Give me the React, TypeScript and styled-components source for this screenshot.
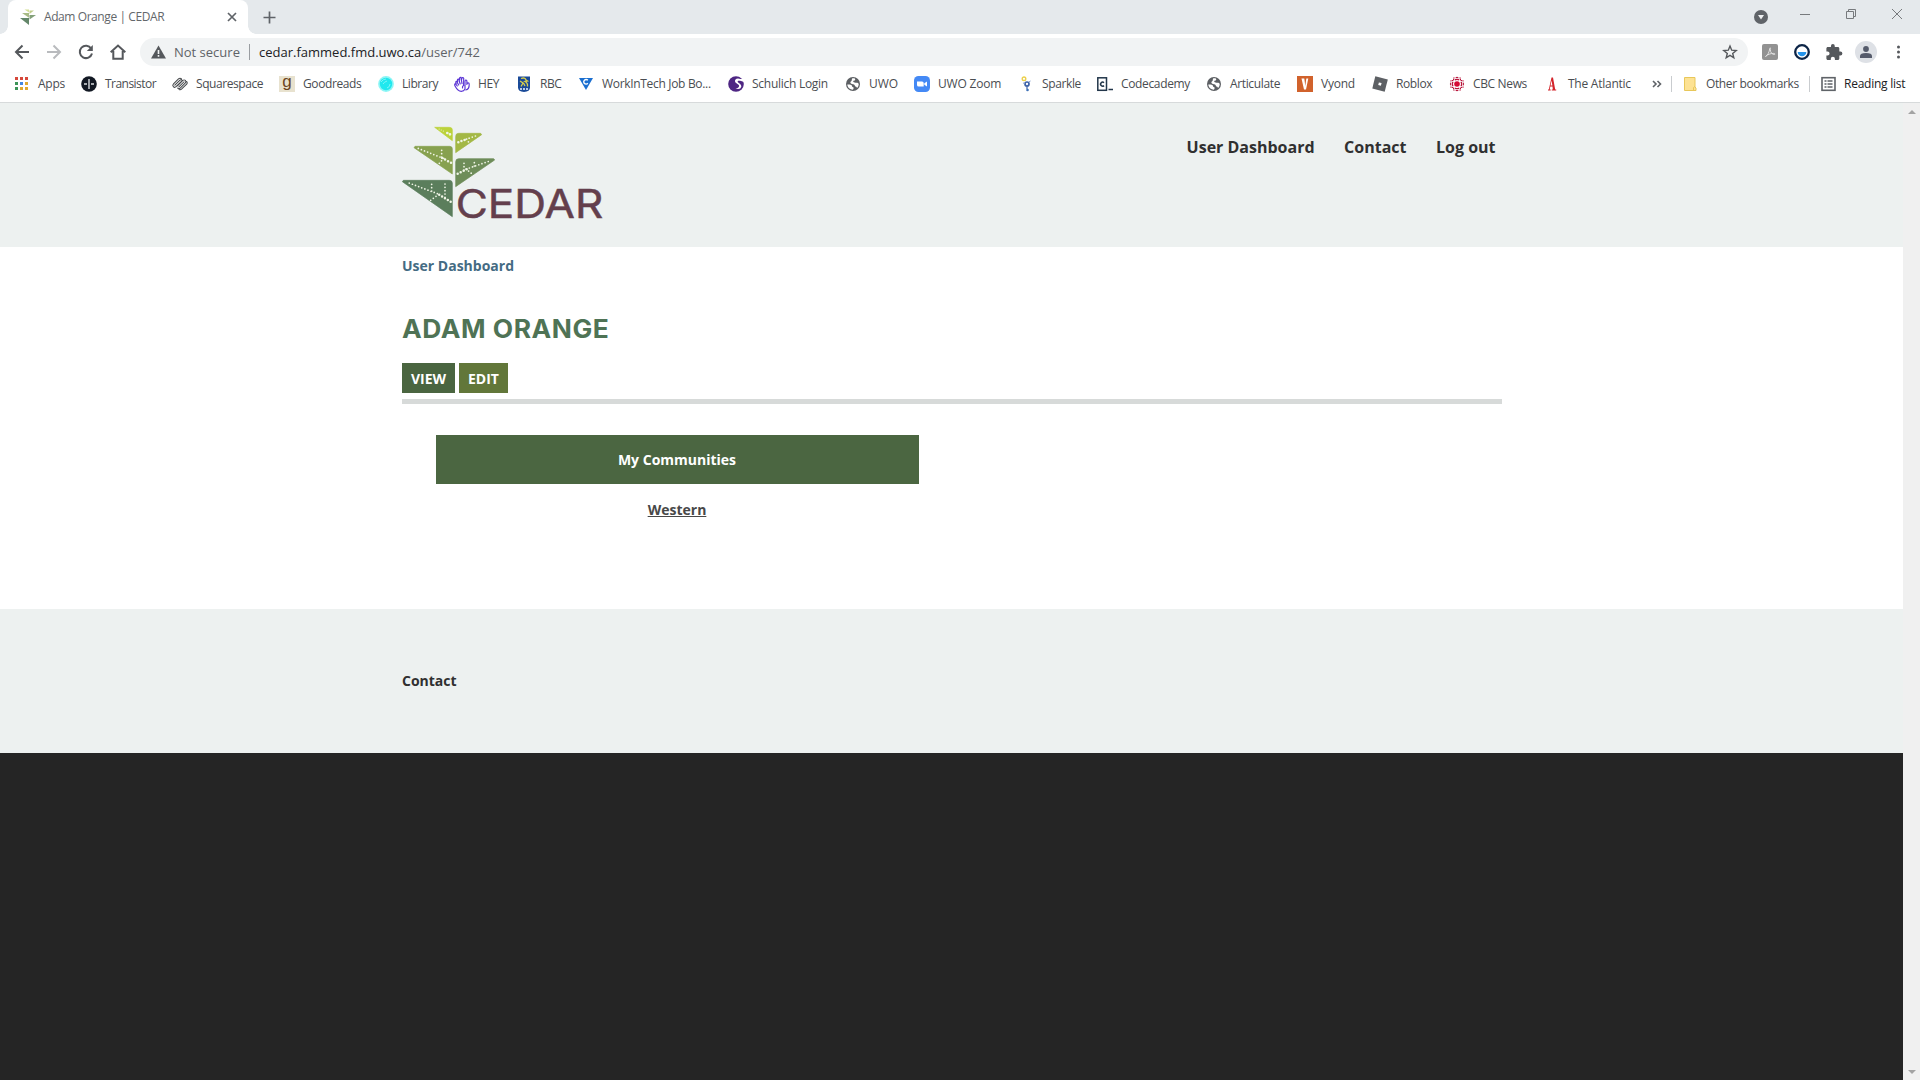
import React from 'react';
import styled, { createGlobalStyle } from 'styled-components';

const GlobalStyle = createGlobalStyle`
  *, *::before, *::after { box-sizing: border-box; }
  body { margin: 0; background: #fff; overflow: hidden; font-family: "Open Sans", "Noto Sans", sans-serif; }
  svg { display: block; flex: none; overflow: visible; }
  a { color: inherit; text-decoration: none; }
`;

const Window = styled.div`
  display: flex;
  flex-direction: column;
  width: 1920px;
  height: 1080px;
`;

/* ---------- browser frame ---------- */

const TabStrip = styled.div`
  display: flex;
  height: 34px;
  padding-left: 8px;
  background: #e5e9ec;
`;

const Tab = styled.div`
  position: relative;
  display: flex;
  align-items: center;
  width: 240px;
  padding: 0 11px 0 12px;
  border-radius: 8px 8px 0 0;
  background: #fff;

  &::before, &::after {
    content: "";
    position: absolute;
    bottom: 0;
    width: 8px;
    height: 8px;
  }
  &::before { left: -8px; background: radial-gradient(circle at 0 0, transparent 7.5px, #fff 8px); }
  &::after { right: -8px; background: radial-gradient(circle at 100% 0, transparent 7.5px, #fff 8px); }
`;

const TabTitle = styled.span`
  flex: 1;
  margin-left: 8px;
  font-size: 12px;
  line-height: 16px;
  letter-spacing: -0.42px;
  color: #63676b;
  white-space: nowrap;
`;

const NewTab = styled.div`
  display: flex;
  align-items: center;
  margin-left: 15px;
`;

const WindowControls = styled.div`
  display: flex;
  align-items: flex-start;
  margin-left: auto;
  padding-right: 18px;
`;

const Control = styled.div<{ $gap: number; $top: number }>`
  margin-right: ${p => p.$gap}px;
  padding-top: ${p => p.$top}px;
`;

const Toolbar = styled.div`
  display: flex;
  align-items: center;
  height: 36px;
  padding-left: 14px;
`;

const NavButtons = styled.div`
  display: flex;
  align-items: center;
  gap: 16px;
  width: 126px;
`;

const Omnibox = styled.div`
  display: flex;
  align-items: center;
  width: 1608px;
  height: 28px;
  padding: 0 10px 0 11px;
  border-radius: 14px;
  background: #f1f3f4;
  font-size: 13px;
  color: #5f6368;
`;

const Security = styled.span`
  width: 75px;
  margin-left: 8px;
`;

const OmniDivider = styled.span`
  width: 1px;
  height: 16px;
  margin-right: 9px;
  background: #9a9da1;
`;

const Url = styled.span`
  flex: 1;
  b { font-weight: 400; color: #202124; }
`;

const Extensions = styled.div`
  display: flex;
  align-items: center;
  margin-left: 14px;
`;

const Extension = styled.div<{ $w: number }>`
  width: ${p => p.$w}px;
`;

const Avatar = styled.div`
  display: flex;
  align-items: center;
  justify-content: center;
  width: 22px;
  height: 22px;
  margin-right: 19px;
  border-radius: 50%;
  background: #dee1e6;
`;

const BookmarkBar = styled.div`
  display: flex;
  align-items: center;
  height: 33px;
  padding: 0 0 4px 14px;
  border-bottom: 1px solid #d7dadb;
`;

const Bookmark = styled.div<{ $w: number; $ls?: number; $dark?: boolean }>`
  display: flex;
  align-items: center;
  gap: 8px;
  flex: none;
  width: ${p => p.$w}px;
  font-size: 12px;
  line-height: 16px;
  letter-spacing: ${p => p.$ls ?? -0.4}px;
  color: ${p => (p.$dark ? '#202124' : '#4a4d51')};
  white-space: nowrap;
`;

const Overflow = styled.div`
  width: 19px;
`;

const BarDivider = styled.div<{ $gap: number }>`
  width: 1px;
  height: 16px;
  margin-right: ${p => p.$gap}px;
  background: #c9cccf;
`;

const Letter = styled.span<{ $bg: string; $fg: string; $size: number; $font: string }>`
  display: flex;
  align-items: center;
  justify-content: center;
  flex: none;
  width: 16px;
  height: 16px;
  background: ${p => p.$bg};
  color: ${p => p.$fg};
  font: 400 ${p => p.$size}px/12px ${p => p.$font};
  padding-bottom: 4px;
  letter-spacing: 0;
`;

/* ---------- web page ---------- */

const Viewport = styled.div`
  display: grid;
  grid-template-columns: 1903px 17px;
  flex: 1;
`;

const Page = styled.div`
  display: flex;
  flex-direction: column;
  background: #252525;
  color: #303030;
  font-weight: 700;
`;

const Container = styled.div`
  width: 1101px;
  margin: 0 auto;
  padding-left: 1px;
`;

const Header = styled.header`
  height: 144px;
  background: #edf1f0;
`;

const HeaderRow = styled(Container)`
  display: flex;
  justify-content: space-between;
  padding-top: 23px;
`;

const MainNav = styled.nav`
  display: flex;
  gap: 29.500px;
  padding: 9px 6.500px 0 0;
  font-size: 16px;
  line-height: 24px;
`;

const Main = styled.main`
  height: 362px;
  background: #fff;
`;

const Breadcrumb = styled.div`
  padding-top: 8px;
  font-size: 14px;
  line-height: 21px;
  color: #446b83;
`;

const Title = styled.h1`
  width: max-content;
  margin: 37px 0 0;
  font: 700 25px/32px Inter, "Open Sans", sans-serif;
  letter-spacing: 0.5px;
  color: #4f7355;
  transform: scaleX(1.056);
  transform-origin: left;
`;

const Tabs = styled.div`
  display: flex;
  gap: 4px;
  height: 59px;
  margin-top: 0;
  padding-top: 18px;
  border-bottom: 5px solid #d7dad9;
`;

const PageTab = styled.a<{ $active?: boolean; $w: number }>`
  display: flex;
  align-items: center;
  justify-content: center;
  width: ${p => p.$w}px;
  height: 30px;
  padding-top: 1px;
  background: ${p => (p.$active ? '#4a6540' : '#62773a')};
  color: #fff;
  font-size: 14px;
  line-height: 29px;
`;

const Communities = styled.section`
  width: 483px;
  margin: 31px 0 0 34px;
  font-size: 14px;
  text-align: center;
`;

const CommunitiesTitle = styled.h2`
  margin: 0;
  height: 49px;
  padding-right: 1px;
  background: #4b6641;
  color: #fff;
  font-size: 14px;
  line-height: 49px;
`;

const CommunityLink = styled.a`
  display: inline-block;
  margin: 15px 1px 0 0;
  line-height: 21px;
  color: #484848;
  text-decoration: underline;
`;

const Footer = styled.footer`
  height: 144px;
  padding-top: 61px;
  background: #edf1f0;
  font-size: 14px;
  line-height: 21px;
`;

const Scrollbar = styled.div`
  display: flex;
  flex-direction: column;
  align-items: center;
  justify-content: space-between;
  padding: 7px 0 6px;
  background: #f0f0f0;
`;

/* ---------- drawings ---------- */

const leaves = [
  ['M134 52H178Q187 52 187 60V92Z', '#bbd23a'],
  ['M272 70H206Q197 70 197 80V128L275 74Z', '#a3b845'],
  ['M75 109H179Q187 109 187 117V192L72 113Z', '#87a14f'],
  ['M311 146H206Q197 146 197 156V230L314 150Z', '#6e8d59'],
  ['M40 211H178Q187 211 187 220V320L37 215Z', '#5b7e5c'],
];

const CedarLogo = () => (
  <svg width="204" height="108" viewBox="36 48 612 324">
    {leaves.map(([d, fill]) => (
      <path key={d} d={d} fill={fill} stroke={fill} strokeWidth="2" strokeLinejoin="round" />
    ))}
    <g fill="none" stroke="#f0f5e6" strokeLinecap="round">
      <path d="M183 158L150 141M205 97L228 88M203 191L238 174M182 275L142 251" strokeWidth="7.500" strokeDasharray="0 10" />
      <path d="M150 141L84 115M228 88L262 76M238 174L302 152M142 251L52 217M155 141V113M148 160L162 144M230 87L238 100M222 180V150M253 168V150M228 177L249 194M125 243V214M165 262V214M122 271L146 253" strokeWidth="5.200" strokeDasharray="0 10" />
      <path d="M180 73L166 66" strokeWidth="8" strokeDasharray="0 9" />
      <path d="M160 63L145 56" strokeWidth="3.500" strokeDasharray="0 7" />
    </g>
    <text x="197" y="323" fontFamily="Inter, sans-serif" fontSize="117" fontWeight="400" fill="#643f4c"
      stroke="#643f4c" strokeWidth="1.500" textLength="443" lengthAdjust="spacingAndGlyphs">CEDAR</text>
  </svg>
);

const CedarIcon = () => (
  <svg width="16" height="16" viewBox="0 0 16 16">
    <path d="M4.500 .5h4.500v3z" fill="#d3df96" />
    <path d="M9.500 1.500h4.500l-4.500 3.500z" fill="#c0cd8b" />
    <path d="M2 4h7v4.800z" fill="#a8bb86" />
    <path d="M9.500 6H16l-6.500 4.500z" fill="#84a07a" />
    <path d="M0 9h9v7z" fill="#64876a" />
  </svg>
);

const Globe = () => (
  <svg width="16" height="16" viewBox="0 0 16 16">
    <circle cx="8" cy="8" r="7" fill="#5c5f63" />
    <path d="M2.300 8.500C4 8.300 6.200 8.500 6.800 9.500S7 11 8.200 11.300 8 13.400 8 13.700C5 13.700 2.500 11.500 2.300 8.500zM7 2.400c2.500-.6 3.500.1 3.200 1.400S8.500 4.300 8.200 5.300 9.500 6.800 11 6.700s2.500.3 2.700 1.300c.1 1.500-.6 3-1.700 4-.4-1.200-1-1.300-1.800-1.400-.6-1-.2-1.600-1.200-2.100S5.800 8 5.400 6.700 6.700 5 6.700 4.400z" fill="#fff" />
  </svg>
);

const AppsIcon = () => {
  const colors = ['#d6483b', '#d6483b', '#d6483b', '#3c9457', '#4387e0', '#e0a92e', '#3c9457', '#e0a92e', '#e0a92e'];
  return (
    <svg width="16" height="16" viewBox="0 0 16 16">
      {colors.map((c, i) => <rect key={i} x={1 + (i % 3) * 5} y={1 + Math.floor(i / 3) * 5} width="3" height="3" fill={c} />)}
    </svg>
  );
};

const TransistorIcon = () => (
  <svg width="16" height="16" viewBox="0 0 16 16">
    <circle cx="8" cy="8" r="7.800" fill="#121823" />
    <path d="M8 3v10M3 8h3M10 8h3" stroke="#d9dce0" strokeWidth="1.400" />
  </svg>
);

const SquarespaceIcon = () => (
  <svg width="16" height="16" viewBox="0 0 17 16" fill="none" stroke="#45484b" strokeWidth="1.100" strokeLinecap="round">
    <path d="M3 9.300L8.200 4.100a1.900 1.900 0 0 1 2.700 0M4.300 10.900l5.500-5.500M1.600 7.900L6.900 2.600a2.300 2.300 0 0 1 3.200 0M1.600 7.900a1.900 1.900 0 0 0 2.700 3M6 12.400a1.900 1.900 0 0 0 2.700 0l5.500-5.500a1.900 1.900 0 0 0-2.700-2.700L6 9.700M7.300 11.100L12.800 5.600M7.600 13.800a2.300 2.300 0 0 0 2.500-.3l5.500-5.400a1.900 1.900 0 0 0 0-2.700" />
  </svg>
);

const LibraryIcon = () => (
  <svg width="16" height="16" viewBox="0 0 16 16">
    <circle cx="8" cy="8" r="7.900" fill="#8df5f5" />
    <circle cx="8" cy="8" r="6.200" fill="#20e8ee" />
    <path d="M3 6q2-3 5-3M5 8q1-2 4-3M9 12q3-1 3-4" stroke="#7af5f7" fill="none" />
  </svg>
);

const HeyIcon = () => (
  <svg width="16" height="16" viewBox="0 0 16 16" fill="none" stroke="#5b35d5" strokeWidth="1.150" strokeLinecap="round" strokeLinejoin="round">
    <path d="M3.300 10L1.300 7.600C.3 8 .6 9.300 1.200 10.300 2.600 13 4.500 15.300 7.300 15.300c1.800 0 3-.8 3.600-2" />
    <path d="M4.600 9L2.700 5.200C1.500 5.200 1.600 6.500 2.200 7.700M6.200 8L4.600 3C3.400 2.800 3.200 4 3.600 5.500M8 7.700L7 1.300C5.700 1 5.300 2 5.600 4M9.600 9L9.700 2.200C9 .9 7.900 1.500 7.900 3M10 9.500C8.800 9.500 8.200 10.500 8.600 12" />
    <path d="M11 12.500V5C11.300 3.600 12.800 3.800 12.900 5V8.500C13.300 6.300 15.200 6.600 15.200 8.300 15.300 11 14.300 13.600 11.700 14" />
  </svg>
);

const RbcIcon = () => (
  <svg width="16" height="16" viewBox="0 0 16 16">
    <path d="M2 .5h12v11Q14 15.500 8 16 2 15.500 2 11.500z" fill="#1a4a98" />
    <path d="M5 2.500q4-1.500 5 1.500l1.500 1-2.500.5q3 1.500 2.500 5M4 5l3 2-2 3.500M7.500 7l1.500 3" fill="none" stroke="#d8cf4b" strokeWidth="1.300" />
    <path d="M4 13h8" stroke="#b9cae6" strokeWidth="2" strokeDasharray="2 1" />
  </svg>
);

const WorkIcon = () => (
  <svg width="16" height="16" viewBox="0 0 16 16">
    <path d="M1 2h14L8 14z" fill="#1b6fd0" />
    <path d="M9.800 4.300a2.300 2.300 0 1 0 0 3" fill="none" stroke="#fff" strokeWidth="1.400" />
  </svg>
);

const SchulichIcon = () => (
  <svg width="16" height="16" viewBox="0 0 16 16">
    <circle cx="8" cy="8" r="7.800" fill="#4e2683" />
    <path d="M16 2.500L12.500 3Q9 1.500 7.300 3.800C6 6.500 9 7.500 10.500 8.700S10.800 12 7.500 12.600Q12.500 14 13.300 10.700C13.600 8 10 7 9.700 5.800S11.500 4.300 16 6z" fill="#fff" />
  </svg>
);

const ZoomIcon = () => (
  <svg width="16" height="16" viewBox="0 0 16 16">
    <rect width="16" height="16" rx="4.500" fill="#4489f5" />
    <path d="M3 5.500h5q1.700 0 1.700 1.500v3.500h-5Q3 10.500 3 9zM10.300 7.300L13 5.500v5l-2.700-1.800z" fill="#fff" />
  </svg>
);

const SparkleIcon = () => (
  <svg width="16" height="16" viewBox="0 0 16 16" fill="none">
    <circle cx="6" cy="2.800" r="1.800" stroke="#ecd04c" strokeWidth="1.400" />
    <circle cx="9" cy="8" r="2" stroke="#3d62a8" strokeWidth="1.700" />
    <path d="M9 10v3" stroke="#3d62a8" strokeWidth="1.200" />
    <circle cx="9.500" cy="14" r="1.300" fill="#3f72b8" />
    <path d="M5 7l2 .5M11 6l1.500-1" stroke="#7f9ccb" />
  </svg>
);

const CodeIcon = () => (
  <svg width="17" height="16" viewBox="0 0 17 16" fill="none" stroke="#22364a">
    <rect x="1.800" y="1.800" width="8.700" height="12.500" strokeWidth="1.500" />
    <path d="M8 6.700a2 2 0 1 0 0 2.900M12.500 13.500h4.500" strokeWidth="1.500" />
  </svg>
);

const VyondIcon = () => (
  <svg width="16" height="16" viewBox="0 0 16 16">
    <rect width="16" height="16" fill="#d1622c" />
    <path d="M4.500 2.500h2.800L8.300 10 9.300 2.500H11.300L9 13.500H7z" fill="#fff" />
  </svg>
);

const RobloxIcon = () => (
  <svg width="16" height="16" viewBox="0 0 16 16">
    <path d="M3.300.3L15.800 3.500 12.700 15.800.3 12.500z" fill="#5d6064" />
    <path d="M6.900 6.400l2.700.7-.7 2.700-2.700-.7z" fill="#fff" />
  </svg>
);

const CbcIcon = () => (
  <svg width="16" height="16" viewBox="0 0 16 16">
    <circle cx="8" cy="8" r="2.800" fill="#d50a35" />
    {[0, 90, 180, 270].map(a => (
      <g key={a} transform={`rotate(${a} 8 8)`} fill="#b8173c">
        <path d="M6 4.500A4 4 0 0 1 10 4.500V3H6zM6.500 2.300h3V1.500Q8 .2 6.500 1.500z" />
        <path d="M10.700 3h1.300v1h1v1.300h-1.300v-1h-1zM10.500 1.300l1.500.4v.8h-1.500zM14.700 5.500l-.4-1.500h-.8v1.500z" />
      </g>
    ))}
  </svg>
);

const AtlanticIcon = () => (
  <svg width="16" height="16" viewBox="0 0 16 16">
    <path d="M7.500 1.500h1.500l2.200 12h1v1H7.800v-1h1L8.500 10.500H6.300L5.700 13.500h1v1H4v-1h.8zM7.500 4.500L6.500 9.500h1.900z" fill="#d3242b" />
  </svg>
);

const FolderIcon = () => (
  <svg width="15" height="16" viewBox="0 0 15 16">
    <path d="M1.500 1.500h10.500v9.500l1 1v2.500H1.500z" fill="#fde293" stroke="#e8c75a" />
    <path d="M10.500 14v-2.500l1.500-1" fill="none" stroke="#e8c75a" />
  </svg>
);

const ReadingIcon = () => (
  <svg width="15" height="16" viewBox="0 0 15 16" fill="none" stroke="#5f6368">
    <rect x="1" y="1.700" width="13" height="12.600" strokeWidth="1.600" />
    <path d="M3.500 5h2M3.500 8h2M3.500 11h2M6.500 5h5M6.500 8h5M6.500 11h5" strokeWidth="1.500" />
  </svg>
);

const bookmarks: { label: string; w: number; ls: number; icon: React.ReactNode }[] = [
  { label: 'Apps', w: 67, ls: -0.25, icon: <AppsIcon /> },
  { label: 'Transistor', w: 91, ls: -0.54, icon: <TransistorIcon /> },
  { label: 'Squarespace', w: 107, ls: -0.42, icon: <SquarespaceIcon /> },
  { label: 'Goodreads', w: 99, ls: -0.4, icon: <Letter $bg="#e8e2cf" $fg="#6b4420" $size={17} $font='"Liberation Sans", sans-serif'>g</Letter> },
  { label: 'Library', w: 76, ls: -0.45, icon: <LibraryIcon /> },
  { label: 'HEY', w: 62, ls: -0.4, icon: <HeyIcon /> },
  { label: 'RBC', w: 62, ls: -0.5, icon: <RbcIcon /> },
  { label: 'WorkInTech Job Bo...', w: 150, ls: -0.32, icon: <WorkIcon /> },
  { label: 'Schulich Login', w: 117, ls: -0.27, icon: <SchulichIcon /> },
  { label: 'UWO', w: 69, ls: -0.1, icon: <Globe /> },
  { label: 'UWO Zoom', w: 104, ls: -0.2, icon: <ZoomIcon /> },
  { label: 'Sparkle', w: 78, ls: -0.37, icon: <SparkleIcon /> },
  { label: 'Codecademy', w: 110, ls: -0.35, icon: <CodeIcon /> },
  { label: 'Articulate', w: 91, ls: -0.36, icon: <Globe /> },
  { label: 'Vyond', w: 75, ls: -0.22, icon: <VyondIcon /> },
  { label: 'Roblox', w: 77, ls: -0.4, icon: <RobloxIcon /> },
  { label: 'CBC News', w: 95, ls: -0.35, icon: <CbcIcon /> },
  { label: 'The Atlantic', w: 108, ls: -0.25, icon: <AtlanticIcon /> },
];

const navIcon = { fill: 'none', stroke: '#55585c', strokeWidth: 2 };

export default function App() {
  return (
    <Window>
      <GlobalStyle />
      <TabStrip>
        <Tab>
          <CedarIcon />
          <TabTitle>Adam Orange | CEDAR</TabTitle>
          <svg width="10" height="10" viewBox="0 0 10 10"><path d="M1 1l8 8M9 1L1 9" stroke="#5f6368" strokeWidth="1.700" /></svg>
        </Tab>
        <NewTab>
          <svg width="13" height="13" viewBox="0 0 13 13"><path d="M6.500 .5v12M.5 6.500h12" stroke="#5f6368" strokeWidth="1.700" /></svg>
        </NewTab>
        <WindowControls>
          <Control $gap={32} $top={10}>
            <svg width="14" height="14" viewBox="0 0 14 14"><circle cx="7" cy="7" r="7" fill="#5f6368" /><path d="M4 5h6L7 9.500z" fill="#eef0f2" /></svg>
          </Control>
          <Control $gap={36} $top={14}>
            <svg width="10" height="1"><path d="M0 .5h10" stroke="#777a7d" /></svg>
          </Control>
          <Control $gap={36} $top={9}>
            <svg width="10" height="10" viewBox="0 0 10 10" fill="none" stroke="#777a7d"><path d="M.5 2.500h7v7h-7zM2.500 2.500v-2h7v7h-2" /></svg>
          </Control>
          <Control $gap={0} $top={9}>
            <svg width="10" height="10" viewBox="0 0 10 10"><path d="M0 0l10 10M10 0l-10 10" stroke="#777a7d" /></svg>
          </Control>
        </WindowControls>
      </TabStrip>

      <Toolbar>
        <NavButtons>
          <svg width="16" height="16" viewBox="0 0 16 16" {...navIcon}><path d="M15 8H2.500M8.500 1.500L2 8l6.500 6.500" /></svg>
          <svg width="16" height="16" viewBox="0 0 16 16" {...navIcon} stroke="#b9bbbe"><path d="M1 8h12.500M7.500 1.500L14 8l-6.500 6.500" /></svg>
          <svg width="16" height="16" viewBox="0 0 16 16" {...navIcon}><path d="M13.200 4.500A6.200 6.200 0 1 0 14 9.500" /><path d="M14.800 1v6H8.800z" fill="#55585c" stroke="none" /></svg>
          <svg width="16" height="16" viewBox="0 0 16 16" {...navIcon}><path d="M.7 8.300L8 1.500l7.300 6.800M3.300 7v7.800h9.400V7" /></svg>
        </NavButtons>
        <Omnibox>
          <svg width="15" height="14" viewBox="0 0 15 14"><path d="M7.500 .5L15 13.500H0z" fill="#55585c" /><path d="M7.500 5v4M7.500 10v1.700" stroke="#f1f3f4" strokeWidth="1.600" /></svg>
          <Security>Not secure</Security>
          <OmniDivider />
          <Url><b>cedar.fammed.fmd.uwo.ca</b>/user/742</Url>
          <svg width="16" height="16" viewBox="0 0 16 16" fill="none" stroke="#55585c" strokeWidth="1.400"><path d="M8 2l1.700 4.200 4.500.3-3.500 2.900 1.100 4.400L8 11.400l-3.800 2.400 1.100-4.400-3.500-2.900 4.500-.3z" /></svg>
        </Omnibox>
        <Extensions>
          <Extension $w={32}>
            <svg width="16" height="16" viewBox="0 0 16 16"><rect width="16" height="16" rx="2" fill="#929292" /><path d="M3.500 12.500c2-1 4-4.500 4.200-8 .3-1.500 1.200-.5.7 1C8 8 10 10.500 12.500 10.500c1-.2.500-1.200-1-1.100C8.500 9.500 5.500 10.300 3.500 12.500z" fill="none" stroke="#e0e0e0" /></svg>
          </Extension>
          <Extension $w={32}>
            <svg width="16" height="16" viewBox="0 0 16 16"><circle cx="8" cy="8" r="6.800" fill="#fff" stroke="#0d2547" strokeWidth="2.300" /><path d="M3.700 8h8.600a4.300 4.300 0 0 1-8.600 0z" fill="#2493ea" /></svg>
          </Extension>
          <Extension $w={29}>
            <svg width="16" height="16" viewBox="1.500 1 21 21"><path fill="#55585c" d="M20.500 11H19V7c0-1.100-.9-2-2-2h-4V3.500a2.500 2.500 0 0 0-5 0V5H4c-1.100 0-2 .9-2 2v3.800h1.500a2.700 2.700 0 0 1 0 5.400H2V20c0 1.100.9 2 2 2h3.800v-1.500a2.700 2.700 0 0 1 5.400 0V22H17c1.100 0 2-.9 2-2v-4h1.500a2.500 2.500 0 0 0 0-5z" /></svg>
          </Extension>
          <Avatar>
            <svg width="12" height="12" viewBox="0 0 12 12" fill="#555b6b"><circle cx="6" cy="3" r="2.900" /><path d="M0 12v-2q0-3 6-3t6 3v2z" /></svg>
          </Avatar>
          <svg width="4" height="14" viewBox="0 0 4 14" fill="#55585c"><circle cx="2.500" cy="2" r="1.500" /><circle cx="2.500" cy="7" r="1.500" /><circle cx="2.500" cy="12" r="1.500" /></svg>
        </Extensions>
      </Toolbar>

      <BookmarkBar>
        {bookmarks.map(b => (
          <Bookmark key={b.label} $w={b.w} $ls={b.ls}>{b.icon}<span>{b.label}</span></Bookmark>
        ))}
        <Overflow>
          <svg width="10" height="8" viewBox="0 0 10 8" fill="none" stroke="#5f6368" strokeWidth="1.600"><path d="M1 1l3 3-3 3M5.500 1l3 3-3 3" /></svg>
        </Overflow>
        <BarDivider $gap={11} />
        <Bookmark $w={126} $ls={-0.38}><FolderIcon /><span>Other bookmarks</span></Bookmark>
        <BarDivider $gap={11} />
        <Bookmark $w={90} $ls={-0.25} $dark><ReadingIcon /><span>Reading list</span></Bookmark>
      </BookmarkBar>

      <Viewport>
        <Page>
          <Header>
            <HeaderRow>
              <CedarLogo />
              <MainNav>
                <a>User Dashboard</a>
                <a>Contact</a>
                <a>Log out</a>
              </MainNav>
            </HeaderRow>
          </Header>
          <Main>
            <Container>
              <Breadcrumb>User Dashboard</Breadcrumb>
              <Title>ADAM ORANGE</Title>
              <Tabs>
                <PageTab $active $w={53}>VIEW</PageTab>
                <PageTab $w={49}>EDIT</PageTab>
              </Tabs>
              <Communities>
                <CommunitiesTitle>My Communities</CommunitiesTitle>
                <CommunityLink>Western</CommunityLink>
              </Communities>
            </Container>
          </Main>
          <Footer>
            <Container>Contact</Container>
          </Footer>
        </Page>
        <Scrollbar>
          <svg width="8" height="4" viewBox="0 0 8 4"><path d="M0 4l4-4 4 4z" fill="#a3a3a3" /></svg>
          <svg width="8" height="4" viewBox="0 0 8 4"><path d="M0 0l4 4 4-4z" fill="#a3a3a3" /></svg>
        </Scrollbar>
      </Viewport>
    </Window>
  );
}
